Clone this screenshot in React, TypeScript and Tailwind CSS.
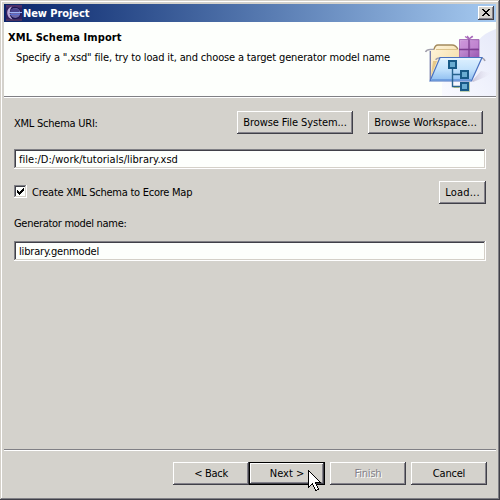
import type { ReactNode } from "react";

const raised =
  "shadow-[inset_-1px_-1px_#404048,inset_1px_1px_#ffffff,inset_-2px_-2px_#84828a]";
const sunken =
  "bg-[#fdfffc] shadow-[inset_-1px_-1px_#ffffff,inset_1px_1px_#808085,inset_-2px_-2px_#d4d0c8,inset_2px_2px_#404048]";

function Button({ children, className }: { children: ReactNode; className: string }) {
  return (
    <button
      type="button"
      className={`flex h-[23px] shrink-0 items-center justify-center whitespace-nowrap bg-[#d4d2cc] pt-px ${className}`}
    >
      {children}
    </button>
  );
}

function Field({ value, tracking }: { value: string; tracking: string }) {
  return (
    <div className={`flex h-5 w-[472px] items-center pl-[5px] pt-[2px] ${sunken}`}>
      <span className={`whitespace-nowrap ${tracking}`}>{value}</span>
    </div>
  );
}

function EclipseIcon() {
  return (
    <svg width="16" height="16" viewBox="0 0 16 16" className="shrink-0">
      <rect width="16" height="16" fill="#33205f" />
      <path d="M0 0h16v2.500H0z" fill="#4d2f68" />
      <path d="M0 14h16v2H0z" fill="#46305f" />
      <circle cx="8.800" cy="8" r="6.200" fill="#1b1650" />
      <circle cx="9.300" cy="8" r="5" fill="#6d68a8" />
      <path d="M5 4.500Q9 2 13 5V7H4.500z" fill="#47418a" />
      <path d="M3 7.500h13" stroke="#9db4f5" strokeWidth="1" />
      <path d="M3 9.500h11" stroke="#5a6fd0" strokeWidth="1" />
      <path d="M6 1.500Q1 3 1.200 8Q1.500 13 6.500 14.500Q3.600 11.500 3.600 8Q3.600 4 6 1.500" fill="#b9a9d6" />
    </svg>
  );
}

function Banner() {
  return (
    <svg width="76" height="74" viewBox="420 22 76 74" className="shrink-0">
      <defs>
        <linearGradient id="halo" x1="0" y1="1" x2="1" y2="0">
          <stop offset="0" stopColor="#f9faff" />
          <stop offset="1" stopColor="#e6e9f9" />
        </linearGradient>
        <linearGradient id="folder" x1="0" y1="0" x2="1" y2="1">
          <stop offset="0" stopColor="#fff5dc" />
          <stop offset="1" stopColor="#f1d699" />
        </linearGradient>
        <linearGradient id="front" x1="0" y1="0" x2="0" y2="1">
          <stop offset="0" stopColor="#dff1ff" />
          <stop offset="0.5" stopColor="#c3e2fc" />
          <stop offset="1" stopColor="#8dbdf0" />
        </linearGradient>
        <linearGradient id="gift" x1="0" y1="0" x2="1" y2="1">
          <stop offset="0" stopColor="#d5a7e1" />
          <stop offset="1" stopColor="#9b58b2" />
        </linearGradient>
        <linearGradient id="cast" x1="0" y1="0" x2="1" y2="0">
          <stop offset="0" stopColor="#c6c1d5" />
          <stop offset="1" stopColor="#e9e7f5" stopOpacity="0" />
        </linearGradient>
      </defs>
      <path d="M496 29Q484 33 479 40V57L442 83V96H496Z" fill="url(#halo)" />
      <path d="M472 81L481 71L491 73Q489 76 473 82Z" fill="url(#cast)" />
      <path d="M425.500 52q1-2.500 5-2.500h4" fill="none" stroke="#a3a1ad" strokeWidth="1.500" />
      <path d="M431 80V50h3q1-5 4-5h15q3 0 5 5h3v30Z" fill="url(#folder)" />
      <path d="M434 49.500q1-4.500 4-4.500h14q4 0 6 4.500" fill="none" stroke="#a38a5c" strokeWidth="1.300" />
      <path d="M436 49.500h22" stroke="#dcc38c" />
      <path d="M430.300 51V80" stroke="#7a80ae" strokeWidth="1.400" />
      <path d="M431 76l6-15h-4z" fill="#e6c98a" />
      <path d="M459.500 39.500h19.500v18h-19.500z" fill="url(#gift)" stroke="#9a5cae" strokeWidth=".8" />
      <path d="M469 39v19M459 49.500h20" stroke="#7d3c90" strokeWidth="1.300" />
      <path d="M461 41h7v7h-7zM471 41h7v7h-7z" fill="#c98dd7" fillOpacity=".6" />
      <path d="M465 36.500l4 2.500l4-2.500M467 36q2 2 2.500 3q.500-1 3-3" fill="none" stroke="#a96bbb" strokeWidth="1.100" />
      <path d="M436 60q0-2 4-2M481 58q3 0 4 3" fill="none" stroke="#a3a1ad" strokeWidth="1.500" />
      <path d="M440 57.500H482L471.500 81H430Z" fill="url(#front)" stroke="#4a72c0" strokeWidth="1.200" />
      <path d="M441 59H480" stroke="#f0f9ff" />
      <path d="M432 79.500H471" stroke="#6f9fe0" />
      <path d="M452.500 68V86.500H461M452.500 74.500H461" fill="none" stroke="#27628e" strokeWidth="1.400" />
      <path d="M453.500 87.500h6" fill="none" stroke="#9db486" />
      <g fill="#69acd1" stroke="#185a87" strokeWidth="2">
        <path d="M449 61h7v7h-7zM461 71h7v7h-7zM461 83h7v7h-7z" />
      </g>
      <path d="M460 91.500h9.500V82" fill="none" stroke="#b3c79e" strokeWidth=".8" />
    </svg>
  );
}

export default function App() {
  return (
    <div
      className="h-[500px] w-[500px] bg-[#d4d2cc] p-1 text-[11px] leading-[14px] text-black shadow-[inset_-1px_-1px_#404048,inset_1px_1px_#d4d0c8,inset_-2px_-2px_#808085,inset_2px_2px_#ffffff]"
      style={{ fontFamily: '"DejaVu Sans Condensed", "DejaVu Sans", sans-serif', fontStretch: "condensed" }}
    >
      <header className="flex h-[18px] items-center bg-linear-to-r from-[#0a246a] to-[#a6caf0] pl-[2px] pr-[2px]">
        <EclipseIcon />
        <h1 className="ml-[1px] flex-1 whitespace-nowrap pt-[2px] text-[11px] font-bold tracking-[-0.08px] text-white">New Project</h1>
        <button type="button" aria-label="Close" className={`flex h-[14px] w-4 items-center justify-center bg-[#d4d2cc] pb-px pr-px ${raised}`}>
          <svg width="8" height="7" viewBox="0 0 8 7" shapeRendering="crispEdges">
            <path d="M0 0h2v1h1v1h2V1h1V0h2v1H7v1H6v1H5v1h1v1h1v1h1v1H6V6H5V5H3v1H2v1H0V6h1V5h1V4h1V3H2V2H1V1H0z" />
          </svg>
        </button>
      </header>
      <section className="flex h-[76px] justify-between border-b border-white bg-[#fdfffc] shadow-[inset_0_-1px_#808085]">
        <div className="pl-1 pt-[9px]">
          <h2 className="whitespace-nowrap text-[11px] font-bold tracking-[0.1px]">XML Schema Import</h2>
          <p className="mt-[6px] whitespace-nowrap pl-2 tracking-[-0.152px]">
            Specify a ".xsd" file, try to load it, and choose a target generator model name
          </p>
        </div>
        <Banner />
      </section>
      <main className="flex h-[351px] flex-col pl-[10px] pt-[13px]">
        <div className="flex h-[23px] items-center">
          <span className="w-[223px] pt-[2px] tracking-[-0.24px]">XML Schema URI:</span>
          <Button className={`w-[116px] tracking-[-0.08px] ${raised}`}>Browse File System...</Button>
          <Button className={`ml-[15px] w-[115px] ${raised}`}>Browse Workspace...</Button>
        </div>
        <div className="mt-[15px]">
          <Field value="file:/D:/work/tutorials/library.xsd" tracking="tracking-[0.02px]" />
        </div>
        <div className="mt-3 flex h-[23px] w-[472px] items-center">
          <div className={`mb-[2px] flex size-[13px] items-center justify-center ${sunken}`}>
            <svg width="7" height="7" viewBox="0 0 7 7" shapeRendering="crispEdges">
              <path d="M0 2h1v1h1v1h1V3h1V2h1V1h1V0h1v3H6v1H5v1H4v1H3v1H2V6H1V5H0z" />
            </svg>
          </div>
          <span className="ml-[5px] flex-1 tracking-[-0.25px]">Create XML Schema to Ecore Map</span>
          <Button className={`w-[47px] tracking-[0.2px] ${raised}`}>Load...</Button>
        </div>
        <div className="mt-[13px] tracking-[-0.3px]">Generator model name:</div>
        <div className="mt-[10px]">
          <Field value="library.genmodel" tracking="tracking-[-0.18px]" />
        </div>
      </main>
      <footer className="flex h-[47px] border-t border-[#808085] pl-[169px] pt-3 shadow-[inset_0_1px_#ffffff]">
        <Button className={`w-[76px] tracking-[-0.3px] ${raised}`}>&lt; Back</Button>
        <div className="relative">
          <Button className="w-[76px] shadow-[inset_0_0_0_1px_#000000,inset_-2px_-2px_#404048,inset_2px_2px_#ffffff,inset_-3px_-3px_#84828a]">
            Next &gt;
          </Button>
          <svg width="13" height="21" viewBox="0 0 13 21" className="absolute left-[59px] top-2" shapeRendering="crispEdges">
            <path d="M.5.5V17.500L4.500 13.500L7.500 20.500L10.500 19.500L7.500 12.500H12.500Z" fill="#fff" stroke="#000" />
          </svg>
        </div>
        <Button className={`ml-[5px] w-[76px] text-[#84828a] tracking-[-0.2px] [text-shadow:1px_1px_#ffffff] ${raised}`}>Finish</Button>
        <Button className={`ml-[5px] w-[76px] tracking-[-0.2px] ${raised}`}>Cancel</Button>
      </footer>
    </div>
  );
}
